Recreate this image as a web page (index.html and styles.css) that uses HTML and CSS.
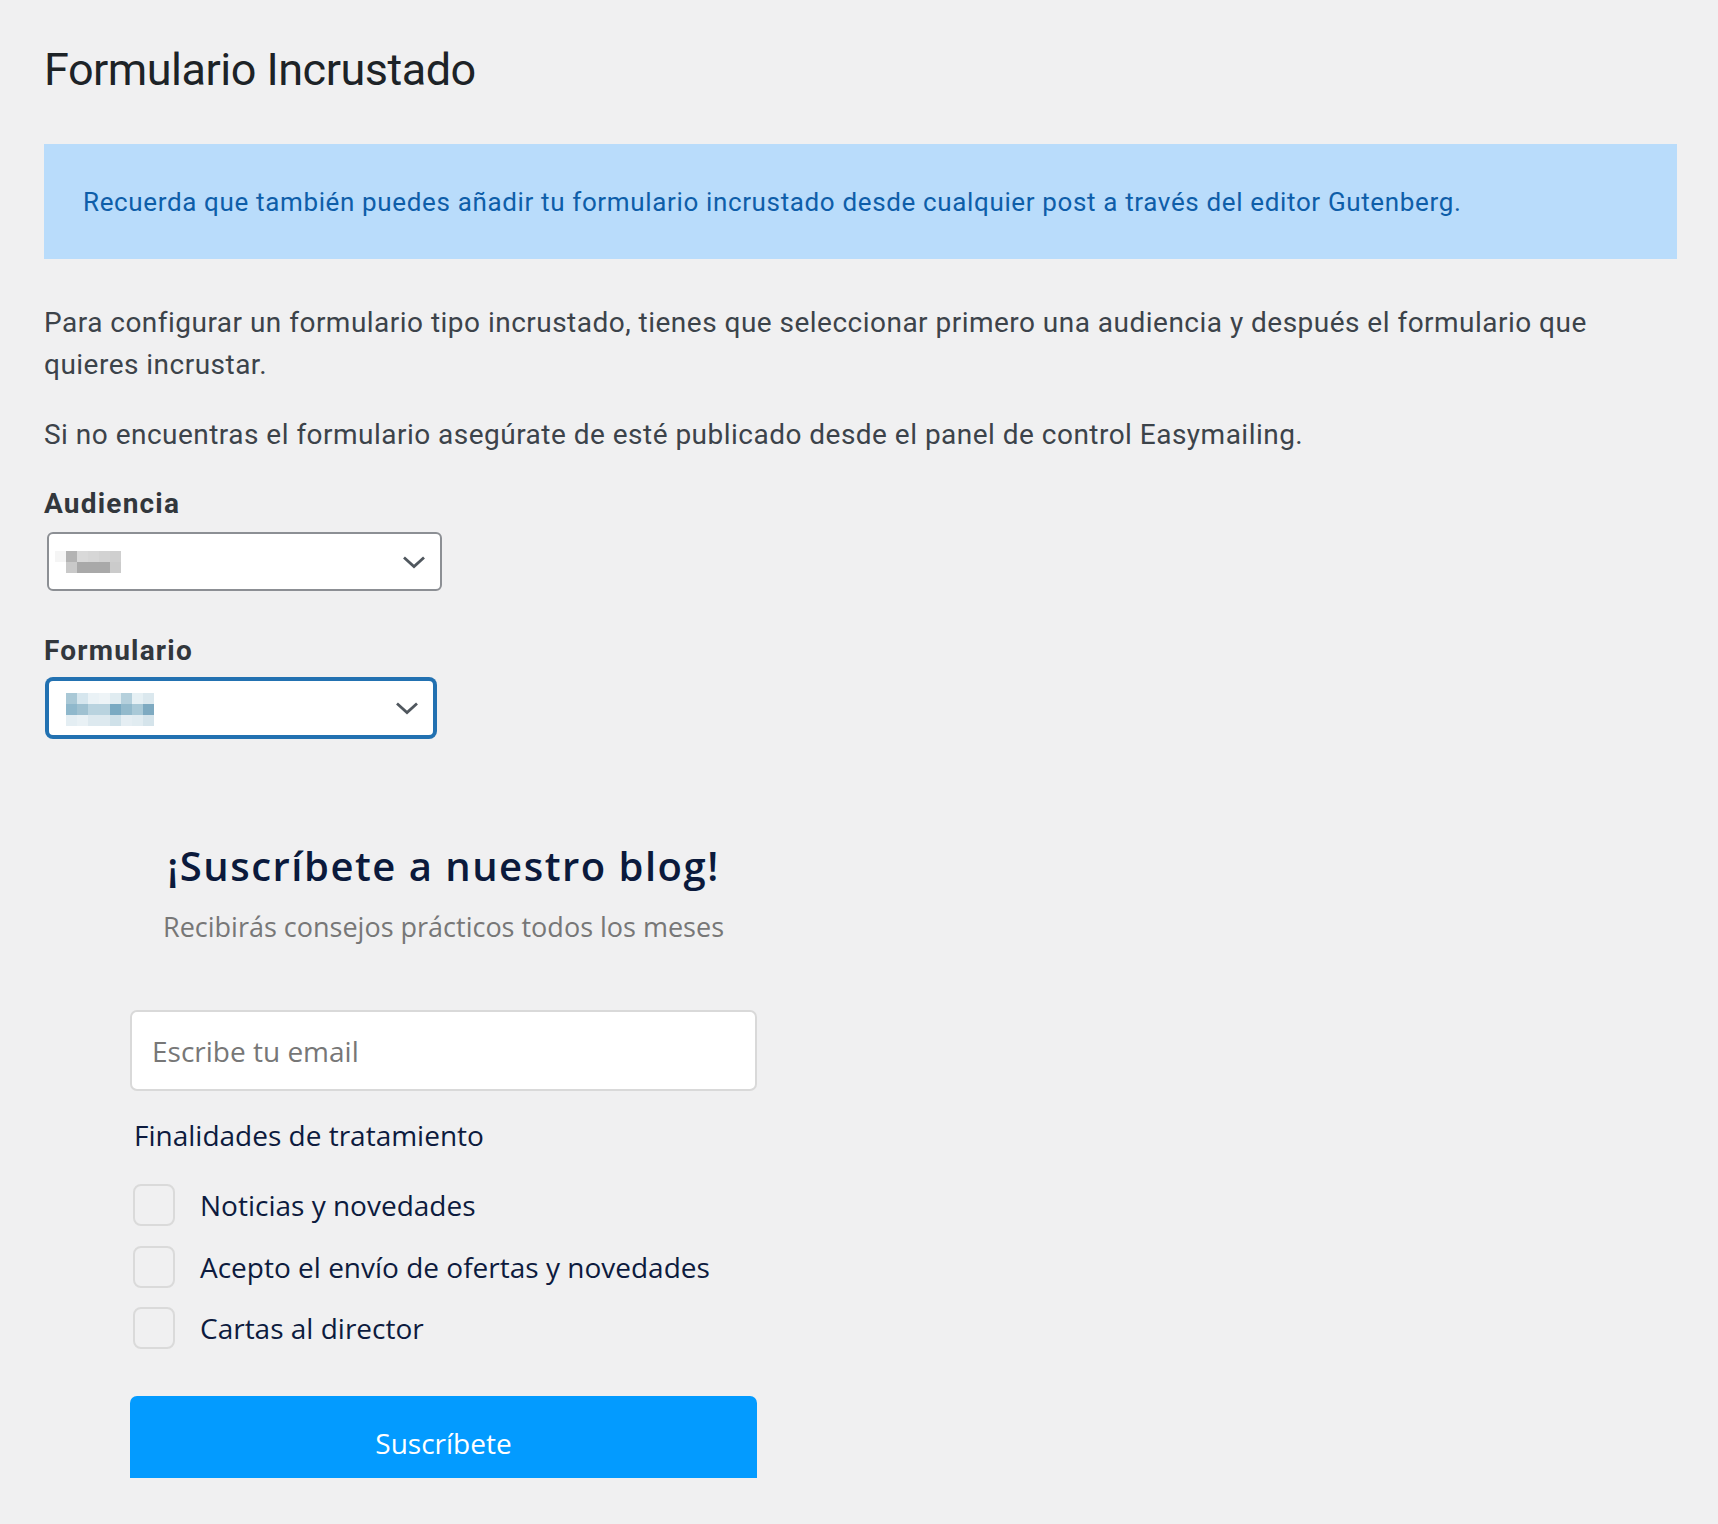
FILE: index.html
```html
<!DOCTYPE html>
<html lang="es">
<head>
<meta charset="utf-8">
<title>Formulario Incrustado</title>
<link rel="stylesheet" href="styles.css">
</head>
<body>
<div class="wrap">
  <h1 class="page-title">Formulario Incrustado</h1>

  <div class="notice">
    <p>Recuerda que también puedes añadir tu formulario incrustado desde cualquier post a través del editor Gutenberg.</p>
  </div>

  <p class="text text-first">Para configurar un formulario tipo incrustado, tienes que seleccionar primero una audiencia y después el formulario que quieres incrustar.</p>
  <p class="text">Si no encuentras el formulario asegúrate de esté publicado desde el panel de control Easymailing.</p>

  <div class="field field-first">
    <label class="field-label">Audiencia</label>
    <div class="select select-audience">
      <svg class="mosaic" width="66" height="22" viewBox="0 0 66 22">
        <rect x="0" y="0" width="11" height="11" fill="#f5f5f5"/>
        <rect x="11" y="0" width="11" height="11" fill="#b3b3b3"/>
        <rect x="22" y="0" width="11" height="11" fill="#d9d9d9"/>
        <rect x="33" y="0" width="11" height="11" fill="#d6d6d6"/>
        <rect x="44" y="0" width="11" height="11" fill="#d2d2d2"/>
        <rect x="55" y="0" width="11" height="11" fill="#cfcfcf"/>
        <rect x="11" y="11" width="11" height="11" fill="#c9c9c9"/>
        <rect x="22" y="11" width="33" height="11" fill="#a9a9a9"/>
        <rect x="55" y="11" width="11" height="11" fill="#cbcbcb"/>
      </svg>
      <svg class="chevron" width="24" height="14" viewBox="0 0 24 14"><polyline points="2,2.5 12,11.5 22,2.5" fill="none" stroke="#50575e" stroke-width="2.8"/></svg>
    </div>
  </div>

  <div class="field field-second">
    <label class="field-label">Formulario</label>
    <div class="select select-form">
      <svg class="mosaic" width="88" height="33" viewBox="0 0 88 33">
        <rect x="0" y="0" width="11" height="11" fill="#a9c8d6"/>
        <rect x="11" y="0" width="11" height="11" fill="#d6e6ee"/>
        <rect x="22" y="0" width="11" height="11" fill="#eaf2f6"/>
        <rect x="33" y="0" width="11" height="11" fill="#eef4f7"/>
        <rect x="44" y="0" width="11" height="11" fill="#e0ecf1"/>
        <rect x="55" y="0" width="11" height="11" fill="#b5d0dc"/>
        <rect x="66" y="0" width="11" height="11" fill="#e6f0f4"/>
        <rect x="77" y="0" width="11" height="11" fill="#dbe8ee"/>
        <rect x="0" y="11" width="11" height="11" fill="#8fb8cc"/>
        <rect x="11" y="11" width="11" height="11" fill="#9fc1d1"/>
        <rect x="22" y="11" width="11" height="11" fill="#b9d3df"/>
        <rect x="33" y="11" width="11" height="11" fill="#b9d3df"/>
        <rect x="44" y="11" width="11" height="11" fill="#7aaac2"/>
        <rect x="55" y="11" width="11" height="11" fill="#93bacc"/>
        <rect x="66" y="11" width="11" height="11" fill="#a9c9d7"/>
        <rect x="77" y="11" width="11" height="11" fill="#7eaac1"/>
        <rect x="0" y="22" width="11" height="11" fill="#e4eef3"/>
        <rect x="11" y="22" width="11" height="11" fill="#e9f1f5"/>
        <rect x="22" y="22" width="11" height="11" fill="#dde9ef"/>
        <rect x="33" y="22" width="11" height="11" fill="#dde9ef"/>
        <rect x="44" y="22" width="11" height="11" fill="#cfe1e9"/>
        <rect x="55" y="22" width="11" height="11" fill="#e5eef3"/>
        <rect x="66" y="22" width="11" height="11" fill="#e1ecf1"/>
        <rect x="77" y="22" width="11" height="11" fill="#d5e4eb"/>
      </svg>
      <svg class="chevron" width="24" height="14" viewBox="0 0 24 14"><polyline points="2,2.5 12,11.5 22,2.5" fill="none" stroke="#50575e" stroke-width="2.8"/></svg>
    </div>
  </div>

  <div class="embed">
    <h2 class="embed-title">¡Suscríbete a nuestro blog!</h2>
    <p class="embed-desc">Recibirás consejos prácticos todos los meses</p>
    <input class="email" type="text" placeholder="Escribe tu email">
    <p class="purposes">Finalidades de tratamiento</p>
    <div class="checks">
      <label class="check"><span class="box"></span>Noticias y novedades</label>
      <label class="check"><span class="box"></span>Acepto el envío de ofertas y novedades</label>
      <label class="check"><span class="box"></span>Cartas al director</label>
    </div>
    <button class="submit" type="button">Suscríbete</button>
  </div>
</div>
</body>
</html>
```
FILE: styles.css
```css
html, body {
  margin: 0;
  background: #f0f0f1;
}

body {
  font-family: Roboto, "Liberation Sans", Arial, sans-serif;
  color: #3c434a;
}

.wrap {
  padding: 38px 41px 44px 44px;
}

.page-title {
  margin: 0;
  font-size: 45px;
  line-height: 64px;
  font-weight: 400;
  letter-spacing: -0.5px;
  color: #1d2327;
}

.notice {
  margin-top: 42px;
  background: #b9dcfb;
  padding: 39px 39px 37px 39px;
}

.notice p {
  margin: 0;
  font-size: 26px;
  line-height: 39px;
  letter-spacing: 0.64px;
  color: #0e5ea9;
}

.text {
  max-width: 1600px;
  margin: 28px 0 0;
  font-size: 28px;
  line-height: 42px;
  letter-spacing: 0.48px;
  color: #3c434a;
}

.text-first {
  margin-top: 43px;
}

.field-first {
  margin-top: 27px;
}

.field-second {
  margin-top: 39px;
}

.field-label {
  display: block;
  font-size: 28px;
  line-height: 42px;
  font-weight: 700;
  letter-spacing: 1.2px;
  color: #32373c;
}

.select {
  box-sizing: border-box;
  margin: 7px 0 0 3px;
  height: 58px;
  display: flex;
  align-items: center;
  justify-content: space-between;
  padding: 0 14px 0 6px;
  background: #fff;
  border: 2px solid #8c8f94;
  border-radius: 6px;
}

.select-audience {
  width: 395px;
  height: 59px;
}

.select-form {
  width: 388px;
  border-color: #2271b1;
  box-shadow: 0 0 0 2px #2271b1;
  padding-left: 17px;
}

.select-form .mosaic {
  margin-top: 3px;
}

.embed {
  width: 627px;
  margin: 104px 0 0 86px;
  font-family: "Open Sans", "Noto Sans", sans-serif;
  color: #0d1b3e;
}

.embed-title {
  margin: 0;
  text-align: center;
  font-size: 40px;
  line-height: 50px;
  font-weight: 600;
  letter-spacing: 1.5px;
  color: #0b1a3c;
}

.embed-desc {
  margin: 18px 0 0;
  text-align: center;
  font-size: 27px;
  line-height: 36px;
  color: #777777;
}

.email {
  display: block;
  box-sizing: border-box;
  width: 100%;
  height: 81px;
  margin-top: 65px;
  padding: 0 20px;
  border: 2px solid #d9d9d9;
  border-radius: 7px;
  background: #fff;
  font-family: "Open Sans", "Noto Sans", sans-serif;
  font-size: 28px;
  color: #333;
  outline: none;
}

.email::placeholder {
  color: #777777;
}

.purposes {
  margin: 24px 0 0;
  padding-left: 4px;
  font-size: 28px;
  line-height: 40px;
  color: #0d1b3e;
}

.checks {
  margin-top: 29px;
  padding-left: 3px;
  display: flex;
  flex-direction: column;
  gap: 19.5px;
}

.check {
  display: flex;
  align-items: center;
  gap: 25px;
  height: 42px;
  font-size: 28px;
  line-height: 42px;
  color: #0d1b3e;
}

.box {
  box-sizing: border-box;
  width: 42px;
  height: 42px;
  flex: none;
  border: 2px solid #dadada;
  border-radius: 8px;
}

.submit {
  box-sizing: border-box;
  display: flex;
  justify-content: center;
  align-items: flex-start;
  width: 100%;
  height: 82px;
  margin-top: 47px;
  padding: 27px 0 0;
  border: none;
  border-radius: 7px 7px 0 0;
  background: #039bff;
  color: #fff;
  font-family: "Open Sans", "Noto Sans", sans-serif;
  font-size: 28px;
  line-height: 40px;
}
```
